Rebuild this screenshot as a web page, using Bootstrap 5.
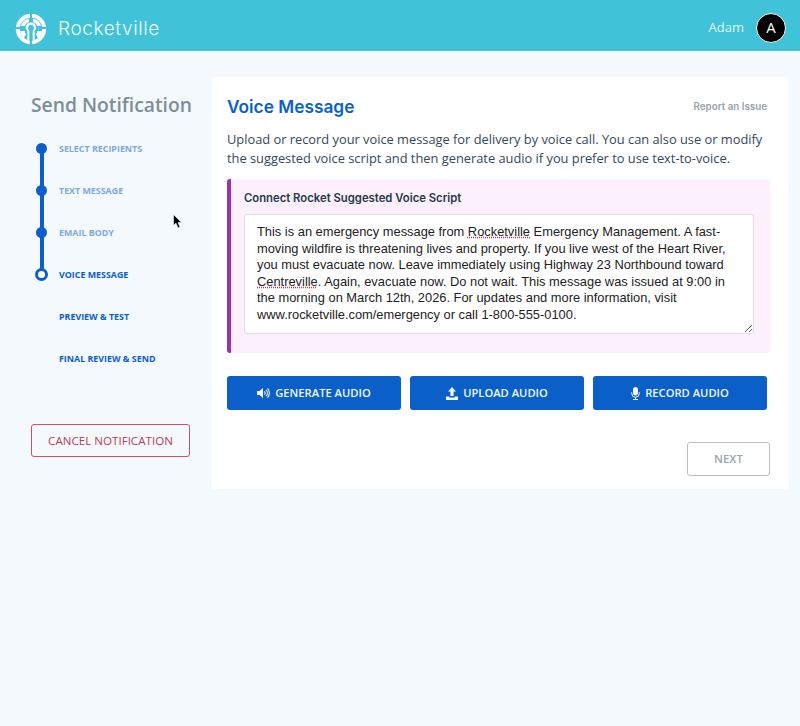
<!DOCTYPE html>
<html lang="en">
<head>
<meta charset="utf-8">
<title>Rocketville</title>
<link href="https://cdn.jsdelivr.net/npm/bootstrap@5.3.0/dist/css/bootstrap.min.css" rel="stylesheet">
<style>
html,body{height:100%}
body{background:#f3f9fd;font-family:"Open Sans","Noto Sans",sans-serif;color:#34495a;position:relative;overflow:hidden}
.topbar{height:51px;background:#40c2d8;padding:4px 14px 0 15px}
.brand-wrap{padding-top:3px}
.brand-name{font-family:Inter,sans-serif;font-size:19px;font-weight:300;color:#effcff;letter-spacing:.6px;margin-left:11px}
.user-name{font-size:13px;color:#dff7fb;margin-right:12px}
.avatar{width:30px;height:30px;border-radius:50%;background:#000;border:1px solid #fff;color:#fff;font-size:15px;line-height:1}
.shell{align-items:flex-start;padding-top:26px}
.side{width:212px;flex:none;padding:0 0 0 31px}
.side-title{font-size:19.3px;font-weight:600;color:#7f8e95;margin:16px 0 21px;line-height:24px;white-space:nowrap}
.steps{list-style:none;margin:0;padding:0 0 0 5px}
.step{height:42px;position:relative;padding-left:23px;font-size:8.9px;font-weight:700;line-height:14px;padding-top:4px;color:#0a60c8;white-space:nowrap}
.step.done{color:#7fa9df}
.step.done::before,.step.now::before{content:"";position:absolute;left:0;top:5px;width:11px;height:11px;border-radius:50%;background:#0a60c8}
.step.now::before{width:13px;height:13px;left:-1px;top:4px;background:#fff;border:3px solid #0a60c8}
.step.done::after{content:"";position:absolute;left:3.5px;top:10px;width:4px;height:42px;background:#0a60c8}
.btn-cancel{width:159px;height:33px;margin-top:34px;padding:0;font-size:11.6px;border:1px solid #dd4a62;color:#bf3c55;background:transparent;border-radius:3px}
.panel{width:576px;height:412px;background:#fff;padding:18px 18px 0 15px;flex:none}
.panel-title{font-family:Inter,sans-serif;font-size:17.3px;font-weight:600;color:#0a60c8;line-height:24px;margin:0}
.issue{font-family:Inter,sans-serif;font-size:9.8px;font-weight:600;color:#98a3a8;margin-right:3px}
.intro{font-size:12.83px;line-height:19px;color:#34495a;margin:11px 0 11px;white-space:nowrap}
.callout{height:174px;background:#fbf0fb;border-left:4px solid #9b2fb8;border-radius:3px;padding:12px 16px 0 13px}
.callout-title{font-family:Inter,sans-serif;font-size:11.3px;font-weight:600;color:#27394a;line-height:14px;margin-bottom:9px}
.script{height:120px;width:510px;background:#fff;border:1px solid #e3dfe6;border-radius:3px;padding:9px 12px;font-family:"Liberation Sans",sans-serif;font-size:12.86px;line-height:16.5px;color:#222;resize:both;overflow:hidden;white-space:nowrap}
.spell{text-decoration:underline dotted #d4314c}
.act-row{gap:9px;margin-top:23px;margin-right:3px}
.btn-act{flex:1 1 0;height:34px;padding:0;background:#0a60c8;border:0;border-radius:3px;color:#f3f8fd;font-size:11.2px;font-weight:600;gap:5px}
.btn-act:hover{background:#0a60c8;color:#f3f8fd}
.btn-next,.btn-next:disabled{width:83px;height:34px;padding:0;border:1px solid #b3bfc2;color:#9aa5a9;font-size:11.4px;font-weight:600;border-radius:3px;background:#fff;margin-top:32px;opacity:1}
.pointer{position:absolute;left:173px;top:214px}
</style>
</head>
<body>
<header class="topbar d-flex align-items-center justify-content-between">
  <div class="brand-wrap d-flex align-items-center">
    <svg width="32" height="32" viewBox="0 0 32 32" aria-hidden="true">
      <circle cx="16" cy="16" r="13.2" fill="none" stroke="#fff" stroke-width="4"/>
      <g fill="#fff">
        <path d="M6 13 A10.5 10.5 0 0 1 14 5.4 L14 9 A7 7 0 0 0 9.6 13Z"/>
        <path d="M26 13 A10.5 10.5 0 0 0 18 5.4 L18 9 A7 7 0 0 1 22.4 13Z"/>
        <path d="M16 9.5 C20 9.5 21.6 13 21.2 16 L19.6 18 L19.6 27 L12.4 27 L12.4 18 L10.8 16 C10.4 13 12 9.5 16 9.5Z"/>
        <path d="M5 18 L9.6 18 A7 7 0 0 0 11 21.4 L8.8 25 A11 11 0 0 1 5 18Z"/>
        <path d="M27 18 L22.4 18 A7 7 0 0 1 21 21.4 L23.2 25 A11 11 0 0 0 27 18Z"/>
      </g>
      <g fill="#40c2d8">
        <circle cx="16" cy="15" r="2.9"/>
        <rect x="14.3" y="16" width="3.4" height="12"/>
      </g>
      <g stroke="#40c2d8" stroke-width="2">
        <path d="M16 0V8.5"/><path d="M0 15H7.5"/><path d="M24.5 15H32"/><path d="M16 27V32"/>
      </g>
    </svg>
    <span class="brand-name">Rocketville</span>
  </div>
  <div class="d-flex align-items-center">
    <span class="user-name">Adam</span>
    <span class="avatar d-flex align-items-center justify-content-center">A</span>
  </div>
</header>
<div class="shell d-flex">
  <aside class="side">
    <h1 class="side-title">Send Notification</h1>
    <ul class="steps">
      <li class="step done">SELECT RECIPIENTS</li>
      <li class="step done">TEXT MESSAGE</li>
      <li class="step done">EMAIL BODY</li>
      <li class="step now">VOICE MESSAGE</li>
      <li class="step">PREVIEW &amp; TEST</li>
      <li class="step">FINAL REVIEW &amp; SEND</li>
    </ul>
    <button type="button" class="btn btn-cancel">CANCEL NOTIFICATION</button>
  </aside>
  <main class="panel">
    <div class="d-flex justify-content-between align-items-center">
      <h2 class="panel-title">Voice Message</h2>
      <span class="issue">Report an Issue</span>
    </div>
    <p class="intro">Upload or record your voice message for delivery by voice call. You can also use or modify<br>the suggested voice script and then generate audio if you prefer to use text-to-voice.</p>
    <div class="callout">
      <div class="callout-title">Connect Rocket Suggested Voice Script</div>
      <div class="script">This is an emergency message from <span class="spell">Rocketville</span> Emergency Management. A fast-<br>moving wildfire is threatening lives and property. If you live west of the Heart River,<br>you must evacuate now. Leave immediately using Highway 23 Northbound toward<br><span class="spell">Centreville</span>. Again, evacuate now. Do not wait. This message was issued at 9:00 in<br>the morning on March 12th, 2026. For updates and more information, visit<br>www.rocketville.com/emergency or call 1-800-555-0100.</div>
    </div>
    <div class="act-row d-flex">
      <button type="button" class="btn btn-act d-flex align-items-center justify-content-center">
        <svg width="13" height="12" viewBox="0 0 13 12" aria-hidden="true"><path fill="currentColor" d="M0 4h2.5L6 1v10L2.5 8H0z"/><path fill="none" stroke="currentColor" stroke-width="1.1" d="M7.4 4.4a2.2 2.2 0 0 1 0 3.2M9 2.9a4.4 4.4 0 0 1 0 6.2M10.5 1.4a6.5 6.5 0 0 1 0 9.2"/></svg>
        GENERATE AUDIO
      </button>
      <button type="button" class="btn btn-act d-flex align-items-center justify-content-center">
        <svg width="12" height="13" viewBox="0 0 12 13" aria-hidden="true"><path fill="currentColor" d="M6 0l4 4.4H7.6V9H4.4V4.4H2zM0 9.6h3.2V10.6h5.6V9.6H12V13H0z"/></svg>
        UPLOAD AUDIO
      </button>
      <button type="button" class="btn btn-act d-flex align-items-center justify-content-center">
        <svg width="9" height="13" viewBox="0 0 9 13" aria-hidden="true"><rect x="2" y="0" width="5" height="8.4" rx="2.5" fill="currentColor"/><path fill="none" stroke="currentColor" stroke-width="1" d="M.7 5.2V6.4a3.8 3.8 0 0 0 7.6 0V5.2M4.5 10.2V12M2 12.5h5"/></svg>
        RECORD AUDIO
      </button>
    </div>
    <div class="d-flex justify-content-end">
      <button type="button" class="btn btn-next" disabled>NEXT</button>
    </div>
  </main>
</div>
<svg class="pointer" width="10" height="15" viewBox="0 0 10 15" aria-hidden="true"><path d="M.5.5V11.5L3 9.2 5 14l2-.9L5 8.6h3.5z" fill="#000" stroke="#fff" stroke-width=".6"/></svg>
</body>
</html>
